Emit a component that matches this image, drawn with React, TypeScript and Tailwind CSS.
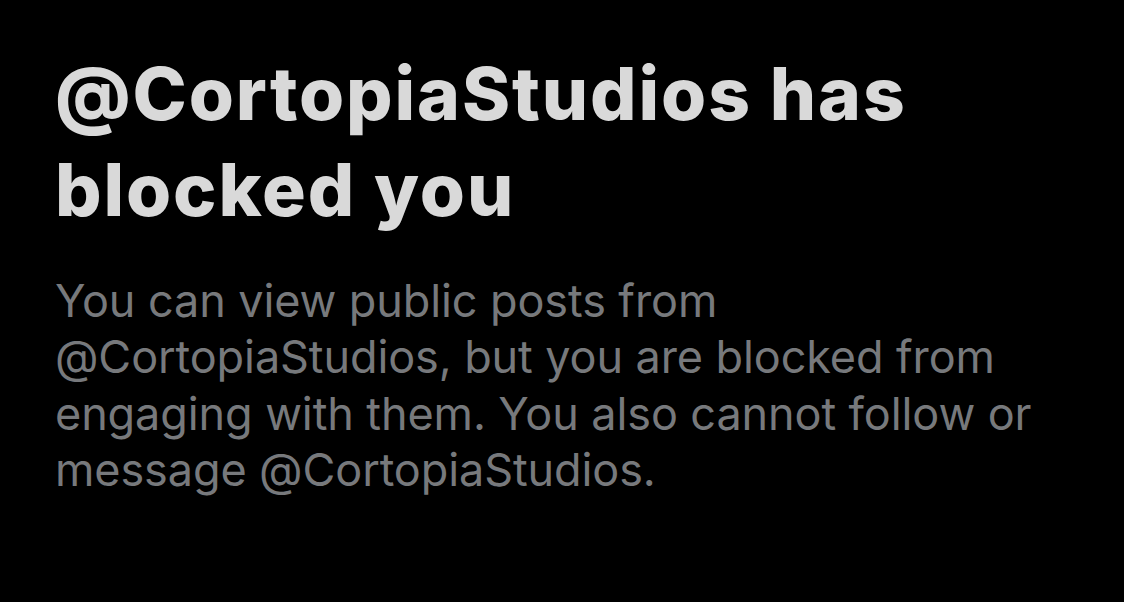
export default function App() {
  return (
    <div className="w-[1124px] h-[602px] bg-black overflow-hidden pl-[55px] pt-[46px] font-['Inter',sans-serif]">
      <h1 className="text-[73px] leading-[96px] font-extrabold tracking-[1.9px] text-[#d9d9d9]">
        @CortopiaStudios has
        <br />
        blocked you
      </h1>
      <p className="mt-[35px] text-[45px] leading-[56.3px] tracking-[-0.1px] text-[#77797c]">
        You can view public posts from
        <br />
        @CortopiaStudios, but you are blocked from
        <br />
        engaging with them. You also cannot follow or
        <br />
        message @CortopiaStudios.
      </p>
    </div>
  )
}
